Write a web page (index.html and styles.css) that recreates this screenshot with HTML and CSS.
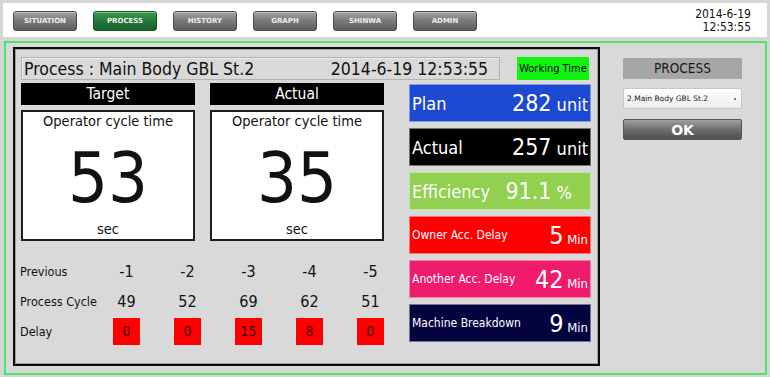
FILE: index.html
```html
<!DOCTYPE html>
<html lang="en">
<head>
  <meta charset="UTF-8">
  <meta name="viewport" content="width=device-width, initial-scale=1.0">
  <title>Process Monitor</title>
  <link rel="stylesheet" href="styles.css">
</head>
<body>
  <div class="screen">
    <header class="topbar">
      <nav class="menu">
        <a class="menu-btn">SITUATION</a>
        <a class="menu-btn active">PROCESS</a>
        <a class="menu-btn">HISTORY</a>
        <a class="menu-btn">GRAPH</a>
        <a class="menu-btn">SHINWA</a>
        <a class="menu-btn">ADMIN</a>
      </nav>
      <div class="clock">
        <span>2014-6-19</span>
        <span>12:53:55</span>
      </div>
    </header>

    <main class="frame">
      <section class="panel">
        <div class="panel-top">
          <div class="title-box">
            <span>Process : Main Body GBL St.2</span>
            <span>2014-6-19 12:53:55</span>
          </div>
          <div class="working">Working Time</div>
        </div>

        <div class="panel-body">
          <div class="left">
            <div class="cards">
              <div class="card">
                <div class="card-head">Target</div>
                <div class="card-box">
                  <p class="card-label">Operator cycle time</p>
                  <p class="card-num">53</p>
                  <p class="card-unit">sec</p>
                </div>
              </div>
              <div class="card">
                <div class="card-head">Actual</div>
                <div class="card-box">
                  <p class="card-label">Operator cycle time</p>
                  <p class="card-num">35</p>
                  <p class="card-unit">sec</p>
                </div>
              </div>
            </div>

            <div class="history">
              <span class="h-label">Previous</span>
              <span class="h-val">-1</span>
              <span class="h-val">-2</span>
              <span class="h-val">-3</span>
              <span class="h-val">-4</span>
              <span class="h-val">-5</span>

              <span class="h-label">Process Cycle</span>
              <span class="h-val">49</span>
              <span class="h-val">52</span>
              <span class="h-val">69</span>
              <span class="h-val">62</span>
              <span class="h-val">51</span>

              <span class="h-label">Delay</span>
              <span class="delay">0</span>
              <span class="delay">0</span>
              <span class="delay">15</span>
              <span class="delay">8</span>
              <span class="delay">0</span>
            </div>
          </div>

          <div class="stats">
            <div class="stat plan"><span class="stat-name">Plan</span><span class="stat-val"><b>282</b> unit</span></div>
            <div class="stat actual"><span class="stat-name">Actual</span><span class="stat-val"><b>257</b> unit</span></div>
            <div class="stat eff"><span class="stat-name">Efficiency</span><span class="stat-val"><b>91.1</b> %</span></div>
            <div class="stat owner small"><span class="stat-name">Owner Acc. Delay</span><span class="stat-val"><b>5</b> Min</span></div>
            <div class="stat another small"><span class="stat-name">Another Acc. Delay</span><span class="stat-val"><b>42</b> Min</span></div>
            <div class="stat machine small"><span class="stat-name">Machine Breakdown</span><span class="stat-val"><b>9</b> Min</span></div>
          </div>
        </div>
      </section>

      <aside class="side">
        <div class="side-label">PROCESS</div>
        <div class="side-select">2.Main Body GBL St.2<span class="arrow"></span></div>
        <button class="side-ok">OK</button>
      </aside>
    </main>
  </div>
</body>
</html>
```

FILE: styles.css
```css
* {
  box-sizing: border-box;
  margin: 0;
  padding: 0;
}

body {
  font-family: 'DejaVu Sans Condensed', 'Liberation Sans', sans-serif;
  background: #d6d6d6;
  color: #111;
  width: 770px;
  height: 377px;
  overflow: hidden;
}

.screen {
  padding: 3px 3px 2px 3px;
}

/* top menu */
.topbar {
  height: 34px;
  background: #fff;
  display: flex;
  align-items: center;
  justify-content: space-between;
  padding: 1px 16px 0 10px;
}

.menu {
  display: flex;
  gap: 16px;
}

.menu-btn {
  width: 64px;
  height: 20px;
  display: flex;
  align-items: center;
  justify-content: center;
  font-family: 'DejaVu Sans', sans-serif;
  font-size: 7px;
  font-weight: bold;
  color: #eee;
  background: linear-gradient(#a3a3a3, #7c7c7c 45%, #5f5f5f);
  border: 1px solid #4a4a4a;
  border-radius: 3px;
  box-shadow: inset 0 1px 0 rgba(255, 255, 255, 0.35);
}

.menu-btn.active {
  background: linear-gradient(#3c9a4c, #22793a 50%, #17612c);
  border-color: #145a26;
}

.clock {
  display: flex;
  flex-direction: column;
  align-items: flex-end;
  font-size: 12px;
  line-height: 13px;
  color: #111;
}

/* main frame */
.frame {
  margin: 4px 0 0 1px;
  height: 334px;
  border: 2px solid #45ea6c;
  background: #d9d9d9;
  display: flex;
  padding: 4px 0 0 7px;
}

.panel {
  width: 587px;
  height: 319px;
  border: 2px solid #0c0c0c;
  box-shadow: inset 0 0 0 1px #a0a0a0;
  padding: 8px 0 0 6px;
}

.panel-top {
  display: flex;
  gap: 17px;
  height: 23px;
}

.title-box {
  width: 479px;
  border: 1px solid #b3b3b3;
  box-shadow: inset 1px 1px 0 #ececec;
  display: flex;
  align-items: center;
  justify-content: space-between;
  padding: 0 11px 0 2px;
  font-size: 17.5px;
  color: #111;
}

.working {
  width: 72px;
  background: #11f411;
  display: flex;
  align-items: center;
  justify-content: center;
  font-size: 11px;
  color: #000;
}

.panel-body {
  display: flex;
  gap: 25px;
  margin-top: 3px;
}

.left {
  width: 363px;
}

.cards {
  display: flex;
  gap: 15px;
}

.card {
  width: 174px;
}

.card-head {
  height: 22px;
  line-height: 22px;
  background: #000;
  color: #fff;
  text-align: center;
  font-size: 15.5px;
}

.card-box {
  margin-top: 5px;
  height: 131px;
  background: #fff;
  border: 2px solid #1c1c1c;
  display: flex;
  flex-direction: column;
  align-items: center;
  justify-content: space-between;
  padding: 1px 0 1px;
}

.card-label,
.card-unit {
  font-size: 14.5px;
  line-height: 17px;
}

.card-num {
  font-size: 70px;
  line-height: 70px;
  margin-top: 4px;
}

.history {
  display: grid;
  grid-template-columns: 76px repeat(5, 61px);
  grid-auto-rows: 30px;
  align-items: center;
  justify-items: center;
  margin: 15px 0 0 -1px;
}

.h-label {
  justify-self: start;
  font-size: 12.5px;
  white-space: nowrap;
}

.h-val {
  font-size: 16px;
}

.delay {
  width: 27px;
  height: 27px;
  line-height: 27px;
  text-align: center;
  background: #ff0000;
  color: #3a0000;
  font-size: 14px;
}

/* stat tiles */
.stats {
  width: 182px;
  margin-top: 1px;
  display: flex;
  flex-direction: column;
  gap: 6px;
}

.stat {
  height: 38px;
  border: 1px solid rgba(255, 255, 255, 0.45);
  display: flex;
  align-items: center;
  justify-content: space-between;
  padding: 0 2px 0 2px;
  color: #fff;
  font-size: 18px;
}

.stat-val {
  font-size: 18px;
  white-space: nowrap;
}

.stat-val b {
  font-weight: normal;
  font-size: 23px;
}

.plan { background: #1d48d1; }
.actual { background: #000; }
.eff { background: #92d050; padding-right: 18px; }
.owner { background: #ff0000; }
.another { background: #f01b6d; }
.machine { background: #03033f; }

.small .stat-name {
  font-size: 12px;
}

.small .stat-val {
  font-size: 13px;
}

.small .stat-val b {
  font-size: 25px;
}

/* side controls */
.side {
  width: 119px;
  margin: 11px 0 0 23px;
  display: flex;
  flex-direction: column;
  gap: 9px;
}

.side-label {
  height: 21px;
  line-height: 21px;
  background: #a6a6a6;
  text-align: center;
  font-size: 13.5px;
  color: #1a1a1a;
}

.side-select {
  height: 21px;
  background: linear-gradient(#ffffff, #ececec);
  border: 1px solid #c8c8c8;
  border-radius: 2px;
  display: flex;
  align-items: center;
  justify-content: space-between;
  padding: 0 5px 0 3px;
  font-family: 'DejaVu Sans', sans-serif;
  font-size: 7.5px;
  color: #222;
}

.arrow {
  width: 2px;
  height: 2px;
  background: #777;
}

.side-ok {
  margin-top: 1px;
  height: 21px;
  border: 1px solid #555;
  border-radius: 2px;
  background: linear-gradient(#a0a0a0, #6e6e6e 50%, #505050);
  color: #fff;
  font-family: 'DejaVu Sans', sans-serif;
  font-weight: bold;
  font-size: 14px;
}
```
